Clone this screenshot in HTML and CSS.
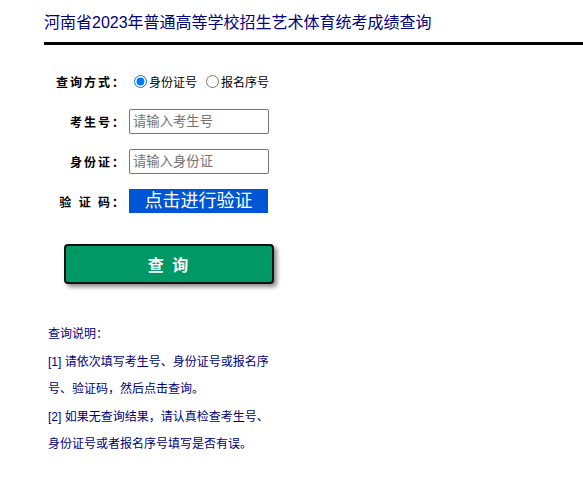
FILE: index.html
```html
<!DOCTYPE html>
<html lang="zh-CN">
<head>
<meta charset="utf-8">
<title>河南省2023年普通高等学校招生艺术体育统考成绩查询</title>
<link rel="stylesheet" href="styles.css">
</head>
<body>
<div class="page">
  <header class="header">
    <h1 class="title">河南省2023年普通高等学校招生艺术体育统考成绩查询</h1>
  </header>
  <form class="form">
    <div class="row row-first">
      <span class="label">查询方式：</span>
      <div class="field radios">
        <label class="radio"><input type="radio" name="way" checked>身份证号</label>
        <label class="radio"><input type="radio" name="way">报名序号</label>
      </div>
    </div>
    <div class="row">
      <span class="label">考生号：</span>
      <input class="text" type="text" placeholder="请输入考生号">
    </div>
    <div class="row">
      <span class="label">身份证：</span>
      <input class="text" type="text" placeholder="请输入身份证">
    </div>
    <div class="row">
      <span class="label">验 证 码：</span>
      <div class="captcha">点击进行验证</div>
    </div>
    <div class="submit-wrap">
      <button type="button" class="submit">查 询</button>
    </div>
  </form>
  <div class="notes">
    <p>查询说明：</p>
    <p>[1] 请依次填写考生号、身份证号或报名序号、验证码，然后点击查询。</p>
    <p>[2] 如果无查询结果，请认真检查考生号、身份证号或者报名序号填写是否有误。</p>
  </div>
</div>
</body>
</html>
```
FILE: styles.css
```css
html, body {
  margin: 0;
  padding: 0;
  background: #fff;
}
body {
  font-family: "Liberation Sans", "Noto Sans CJK SC", sans-serif;
  color: #000;
}
.page {
  width: 583px;
}
.header {
  margin-left: 44px;
  border-bottom: 3px solid #000;
  padding-top: 12px;
  padding-bottom: 8px;
}
.title {
  margin: 0;
  font-size: 16px;
  font-weight: normal;
  line-height: 22px;
  color: #000080;
}
.form {
  margin-top: 24px;
}
.row {
  display: flex;
  align-items: center;
  height: 24px;
  margin-top: 16px;
}
.row-first {
  margin-top: 0;
  margin-bottom: 3px;
}
.label {
  width: 126px;
  text-align: right;
  font-size: 12px;
  font-weight: bold;
  letter-spacing: 2px;
  margin-right: 3px;
  white-space: pre;
}
.radios {
  display: flex;
  align-items: center;
  font-size: 12px;
}
.radio {
  display: flex;
  align-items: center;
  margin-right: 4px;
}
.radio input {
  margin: 0 2px 0 5px;
  width: 13px;
  height: 13px;
}
.text {
  box-sizing: border-box;
  width: 140px;
  height: 25px;
  border: 1px solid #767676;
  border-radius: 2px;
  padding: 1px 3px;
  font-size: 13.33px;
  font-family: "Liberation Sans", "Noto Sans CJK SC", sans-serif;
}
.text::placeholder {
  color: #757575;
}
.captcha {
  width: 139px;
  height: 24px;
  background: #0055d5;
  color: #fff;
  font-size: 18px;
  line-height: 24px;
  text-align: center;
}
.submit-wrap {
  margin-top: 31px;
  padding-left: 64px;
}
.submit {
  display: block;
  box-sizing: border-box;
  width: 210px;
  height: 40px;
  border: 2px solid #111;
  border-radius: 4px;
  background: #009966;
  color: #fff;
  font-size: 16px;
  font-weight: bold;
  font-family: "Liberation Sans", "Noto Sans CJK SC", sans-serif;
  letter-spacing: 2px;
  box-shadow: 3px 3px 4px rgba(0, 0, 0, 0.45);
  padding: 0;
}
.notes {
  margin-top: 37px;
  margin-left: 48px;
  width: 226px;
  font-size: 12px;
  line-height: 27.5px;
  color: #000080;
}
.notes p {
  margin: 0;
}
```
